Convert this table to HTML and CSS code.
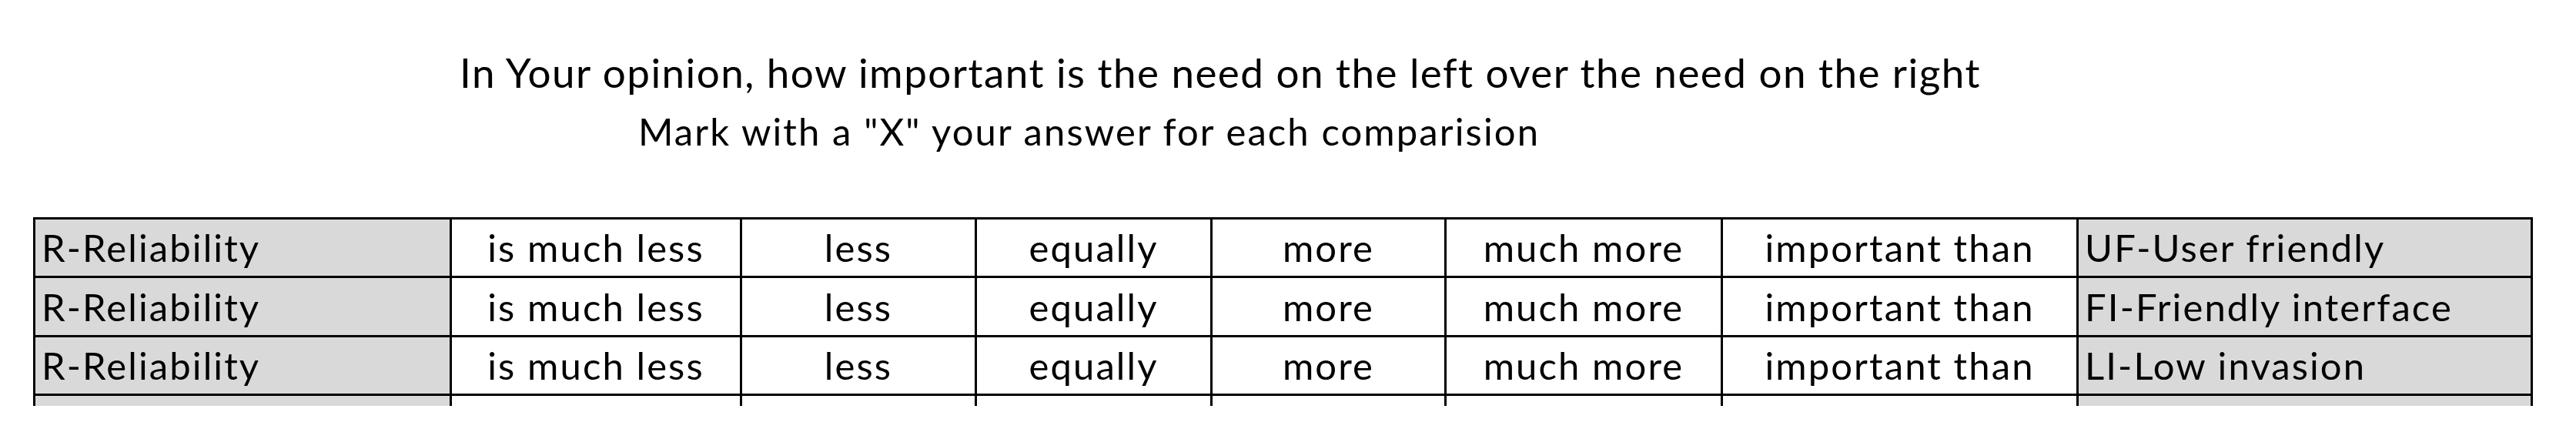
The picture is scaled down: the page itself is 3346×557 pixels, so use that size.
FILE: index.html
```html
<!DOCTYPE html>
<html lang="en">
<head>
<meta charset="utf-8">
<title>Pairwise comparison</title>
<link rel="stylesheet" href="styles.css">
</head>
<body>
<div class="sheet">
  <div class="heading">
    <p class="title">In Your opinion, how important is the need on the left over the need on the right</p>
    <p class="subtitle">Mark with a "X" your answer for each comparision</p>
  </div>
  <div class="grid">
    <div class="cell need">R-Reliability</div>
    <div class="cell opt">is much less</div>
    <div class="cell opt">less</div>
    <div class="cell opt">equally</div>
    <div class="cell opt">more</div>
    <div class="cell opt">much more</div>
    <div class="cell opt">important than</div>
    <div class="cell need last">UF-User friendly</div>

    <div class="cell need">R-Reliability</div>
    <div class="cell opt">is much less</div>
    <div class="cell opt">less</div>
    <div class="cell opt">equally</div>
    <div class="cell opt">more</div>
    <div class="cell opt">much more</div>
    <div class="cell opt">important than</div>
    <div class="cell need last">FI-Friendly interface</div>

    <div class="cell need">R-Reliability</div>
    <div class="cell opt">is much less</div>
    <div class="cell opt">less</div>
    <div class="cell opt">equally</div>
    <div class="cell opt">more</div>
    <div class="cell opt">much more</div>
    <div class="cell opt">important than</div>
    <div class="cell need last">LI-Low invasion</div>

    <div class="cell need"></div>
    <div class="cell opt"></div>
    <div class="cell opt"></div>
    <div class="cell opt"></div>
    <div class="cell opt"></div>
    <div class="cell opt"></div>
    <div class="cell opt"></div>
    <div class="cell need last"></div>
  </div>
</div>
</body>
</html>
```
FILE: styles.css
```css
html, body {
  margin: 0;
  padding: 0;
  background: #ffffff;
}

.sheet {
  width: 3346px;
  height: 557px;
  overflow: hidden;
  font-family: Lato, "Open Sans", sans-serif;
  color: #000;
}

.heading {
  padding-top: 62px;
}

.title {
  margin: 0;
  padding-left: 597px;
  font-size: 53px;
  line-height: 64px;
  letter-spacing: 1.45px;
  white-space: nowrap;
}

.subtitle {
  margin: 15px 0 0 0;
  padding-left: 829px;
  font-size: 49px;
  line-height: 58px;
  letter-spacing: 2.1px;
  white-space: nowrap;
}

.grid {
  margin: 83px 0 0 43px;
  display: grid;
  grid-template-columns: 541px 377px 305px 306px 304px 359px 462px 593px;
  grid-template-rows: 76px 77px 76px 16px;
  width: 3247px;
}

.cell {
  box-sizing: border-box;
  border-top: 3px solid #000;
  border-left: 3px solid #000;
  display: flex;
  align-items: flex-end;
  padding: 0 8px 8px 8px;
  font-size: 49px;
  line-height: 58px;
  letter-spacing: 2.1px;
  white-space: nowrap;
  overflow: hidden;
}

.need {
  background: #d9d9d9;
  justify-content: flex-start;
}

.opt {
  background: #ffffff;
  justify-content: center;
}

.last {
  border-right: 3px solid #000;
}
```
